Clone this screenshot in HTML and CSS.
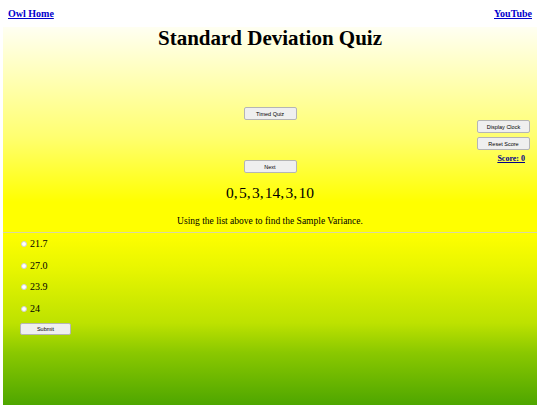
FILE: index.html
```html
<!DOCTYPE html>
<html>
<head>
<meta charset="utf-8">
<link rel="stylesheet" href="styles.css">
</head>
<body>
<div class="top-links">
  <a href="#">Owl Home</a>
  <a href="#">YouTube</a>
</div>
<div class="wrap">
  <section class="upper">
    <h1 class="title">Standard Deviation Quiz</h1>
    <div class="controls">
      <div class="side"></div>
      <div class="center">
        <button class="btn">Timed Quiz</button>
        <button class="btn next">Next</button>
      </div>
      <div class="side right">
        <button class="btn">Display Clock</button>
        <button class="btn">Reset Score</button>
        <a class="score" href="#">Score: 0</a>
      </div>
    </div>
    <div class="math">0,&#8202;5,&#8202;3,&#8202;14,&#8202;3,&#8202;10</div>
    <p class="prompt">Using the list above to find the Sample Variance.</p>
  </section>
  <hr class="rule">
  <section class="lower">
    <label class="opt"><span class="radio"></span>21.7</label>
    <label class="opt"><span class="radio"></span>27.0</label>
    <label class="opt"><span class="radio"></span>23.9</label>
    <label class="opt"><span class="radio"></span>24</label>
    <button class="btn submit">Submit</button>
  </section>
</div>
</body>
</html>
```
FILE: styles.css
```css
html, body {
  margin: 0;
  padding: 0;
  height: 100%;
}
body {
  background: #ffffff;
  font-family: "Liberation Serif", "Times New Roman", serif;
  color: #000;
  display: flex;
  flex-direction: column;
}
.top-links {
  display: flex;
  justify-content: space-between;
  padding: 9px 8px 0 8px;
  height: 18px;
}
.top-links a {
  font-size: 10px;
  font-weight: bold;
  color: #0000cc;
  line-height: 10px;
}
.wrap {
  margin: 0 3px;
  flex: 1;
  display: flex;
  flex-direction: column;
}
.upper {
  background: linear-gradient(#fffff2 0px, #ffff70 110px, #ffff00 175px, #ffff00 100%);
  height: 205px;
}
.title {
  margin: 0;
  text-align: center;
  font-size: 21px;
  line-height: 22px;
  font-weight: bold;
}
.controls {
  display: grid;
  grid-template-columns: 1fr auto 1fr;
  margin-top: 58px;
}
.center {
  display: flex;
  flex-direction: column;
  align-items: center;
}
.side.right {
  display: flex;
  flex-direction: column;
  align-items: flex-end;
  gap: 4px;
  padding-top: 13px;
  padding-right: 7px;
}
.btn {
  font-family: "Liberation Sans", Arial, sans-serif;
  font-size: 5.5px;
  width: 53px;
  height: 13px;
  padding: 0;
  background: #efefef;
  border: 1px solid #b5b5b5;
  border-radius: 2px;
  color: #000;
}
.next {
  margin-top: 40px;
}
.score {
  font-size: 8px;
  font-weight: bold;
  color: #00008b;
  margin-right: 5px;
  line-height: 10px;
}
.math {
  text-align: center;
  font-family: "Liberation Serif", serif;
  font-size: 15.5px;
  margin-top: 10px;
  line-height: 20px;
}
.prompt {
  text-align: center;
  font-size: 9.5px;
  margin: 12px 0 0 0;
  line-height: 12px;
}
.rule {
  margin: 0;
  border: none;
  height: 1px;
  background: #d8d8a0;
}
.lower {
  flex: 1;
  background: linear-gradient(#ffff00 0px, #e8f600 35px, #bde200 90px, #8ac800 120px, #4ea600 100%);
  padding: 4px 0 0 17px;
  display: flex;
  flex-direction: column;
  align-items: flex-start;
}
.opt {
  display: flex;
  align-items: center;
  font-size: 10px;
  line-height: 14px;
  margin-bottom: 7.5px;
}
.radio {
  width: 4px;
  height: 4px;
  border: 1px solid #d0d0d0;
  border-radius: 50%;
  background: #fff;
  margin: 0 3px 0 1px;
}
.submit {
  margin-top: 0;
  margin-left: 0;
  width: 51px;
  height: 12px;
}
```
